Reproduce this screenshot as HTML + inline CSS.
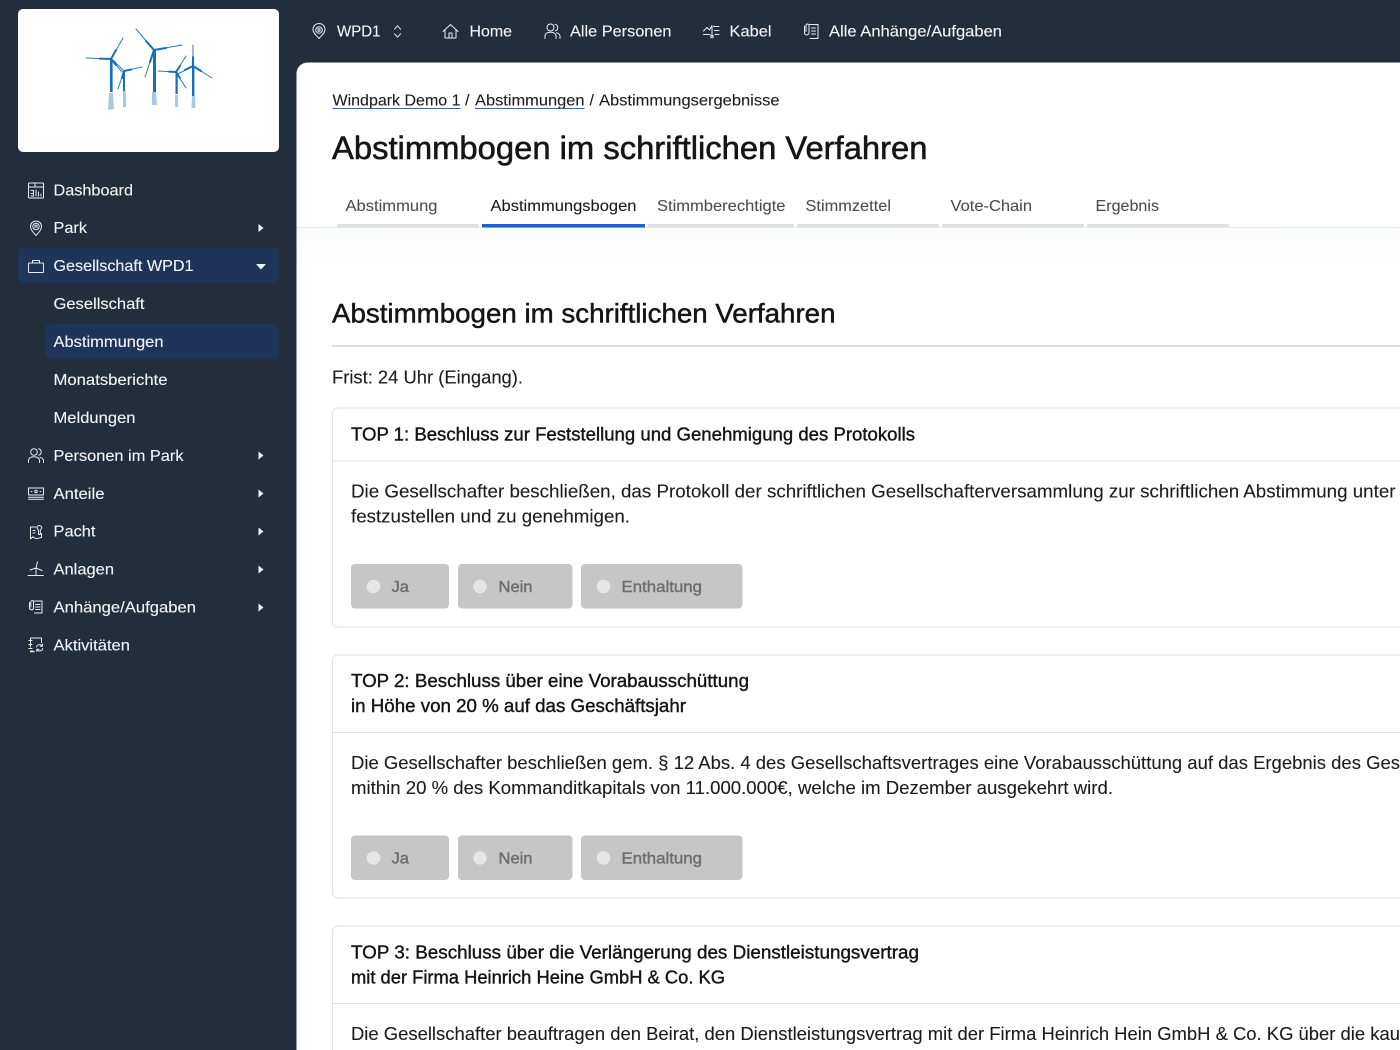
<!DOCTYPE html>
<html lang="de">
<head>
<meta charset="utf-8">
<title>Abstimmbogen im schriftlichen Verfahren</title>
<style>
html,body{margin:0;padding:0;width:1400px;height:1050px;overflow:hidden;background:#222e3c}
svg{display:block}
text{font-family:"Liberation Sans",sans-serif;font-size:16px}
.n{fill:#f2f4f6;font-size:16px;stroke:#f2f4f6;stroke-width:.12px}
.t{fill:#4d4d4d;font-size:16px;stroke:#4d4d4d;stroke-width:.08px}
.d{fill:#1c1c1c;font-size:18px;stroke:#1c1c1c;stroke-width:.1px}
.m{fill:#141414;font-size:18px;stroke:#141414;stroke-width:.38px}
.b{fill:#6e6e6e;font-size:16px;stroke:#6e6e6e;stroke-width:.4px}
.i{fill:none;stroke:#e8ecef;stroke-width:1;stroke-linecap:round;stroke-linejoin:round}
.bl{stroke:#2a7cc0;stroke-width:1;stroke-linecap:round}
.bh{stroke:#1470b8;stroke-width:2;stroke-linecap:round}
</style>
</head>
<body>
<svg xmlns="http://www.w3.org/2000/svg" width="1400" height="1050" viewBox="0 0 1400 1050">
<rect width="1400" height="1050" fill="#222e3c"/>

<!-- logo -->
<rect x="18" y="9" width="261" height="143" rx="5" fill="#fff"/>
<g class="bl">
<line x1="111" y1="59" x2="86" y2="58"/><line x1="111" y1="59" x2="123" y2="38"/><line x1="111" y1="59" x2="122" y2="72"/>
<line x1="124" y1="71" x2="142" y2="67"/><line x1="124" y1="71" x2="118" y2="89"/><line x1="124" y1="71" x2="113" y2="60"/>
<line x1="154" y1="50" x2="136" y2="29"/><line x1="154" y1="50" x2="182" y2="45"/><line x1="154" y1="50" x2="145" y2="77"/>
<line x1="176" y1="72" x2="158" y2="71"/><line x1="176" y1="72" x2="186" y2="56"/><line x1="176" y1="72" x2="186" y2="88"/>
<line x1="193" y1="66" x2="193" y2="45"/><line x1="193" y1="66" x2="212" y2="78"/><line x1="193" y1="66" x2="176" y2="75"/>
</g>
<g class="bh">
<line x1="111" y1="59" x2="100" y2="58.600"/><line x1="111" y1="59" x2="116" y2="50"/><line x1="111" y1="59" x2="116" y2="65"/>
<line x1="124" y1="71" x2="131" y2="69.500"/><line x1="124" y1="71" x2="122" y2="78"/>
<line x1="154" y1="50" x2="146" y2="41"/><line x1="154" y1="50" x2="166" y2="48"/><line x1="154" y1="50" x2="150" y2="62"/>
<line x1="176" y1="72" x2="169" y2="71.600"/><line x1="176" y1="72" x2="180" y2="66"/><line x1="176" y1="72" x2="180" y2="78"/>
<line x1="193" y1="66" x2="193" y2="57"/><line x1="193" y1="66" x2="201" y2="71"/><line x1="193" y1="66" x2="185" y2="70"/>
</g>
<g fill="#1470b8">
<rect x="110" y="59" width="2.600" height="33"/><rect x="123" y="71" width="2" height="20"/><rect x="153" y="50" width="3" height="42"/><rect x="175.500" y="72" width="2.200" height="22"/><rect x="192" y="66" width="2.400" height="30"/>
</g>
<g fill="#a9c9e3">
<polygon points="109,93 113,93 114,109 108,110"/><polygon points="123,91 126,91 126,107 123,107"/><polygon points="152,92 156,92 157,105 152,105"/><polygon points="175,95 178,95 178,107 175,107"/><polygon points="192,96 195,96 195.500,108 191.500,108"/>
</g>

<!-- sidebar -->
<rect x="18" y="248" width="261" height="35" rx="5" fill="#1e3559"/>
<rect x="45" y="324" width="234" height="35" rx="5" fill="#1e3559"/>
<text class="n" x="53.500" y="195.500" textLength="79.500" lengthAdjust="spacingAndGlyphs">Dashboard</text>
<text class="n" x="53.500" y="233" textLength="33.500" lengthAdjust="spacingAndGlyphs">Park</text>
<text class="n" x="53.500" y="271" textLength="140" lengthAdjust="spacingAndGlyphs">Gesellschaft WPD1</text>
<text class="n" x="53.500" y="309" textLength="91" lengthAdjust="spacingAndGlyphs">Gesellschaft</text>
<text class="n" x="53.500" y="347" textLength="110" lengthAdjust="spacingAndGlyphs">Abstimmungen</text>
<text class="n" x="53.500" y="385" textLength="114" lengthAdjust="spacingAndGlyphs">Monatsberichte</text>
<text class="n" x="53.500" y="423" textLength="82" lengthAdjust="spacingAndGlyphs">Meldungen</text>
<text class="n" x="53.500" y="461" textLength="130" lengthAdjust="spacingAndGlyphs">Personen im Park</text>
<text class="n" x="53.500" y="499" textLength="51" lengthAdjust="spacingAndGlyphs">Anteile</text>
<text class="n" x="53.500" y="536.500" textLength="42" lengthAdjust="spacingAndGlyphs">Pacht</text>
<text class="n" x="53.500" y="574.500" textLength="60.500" lengthAdjust="spacingAndGlyphs">Anlagen</text>
<text class="n" x="53.500" y="612.500" textLength="142.500" lengthAdjust="spacingAndGlyphs">Anhänge/Aufgaben</text>
<text class="n" x="53.500" y="650.500" textLength="76.500" lengthAdjust="spacingAndGlyphs">Aktivitäten</text>

<!-- arrows -->
<g fill="#f2f4f6">
<polygon points="258.500,224 263.500,228 258.500,232"/>
<polygon points="256,264 266,264 261,269.500"/>
<polygon points="258.500,451.500 263.500,455.500 258.500,459.500"/>
<polygon points="258.500,489.500 263.500,493.500 258.500,497.500"/>
<polygon points="258.500,527.500 263.500,531.500 258.500,535.500"/>
<polygon points="258.500,565.500 263.500,569.500 258.500,573.500"/>
<polygon points="258.500,603.500 263.500,607.500 258.500,611.500"/>
</g>

<!-- sidebar icons -->
<g class="i">
<!-- dashboard -->
<rect x="28.500" y="183" width="15" height="15" rx=".8"/><path d="M28.500 187H43.500M35 183V187M31 193.500H33.500V190.500H31M31 196H33.500V193.500M36 190V196M38.500 192V196M41 194V196"/>
<!-- park pin -->
<path d="M36 235.500C33 232 30.500 229.800 30.500 226.500A5.500 5.500 0 0 1 41.500 226.500C41.500 229.800 39 232 36 235.500Z"/><circle cx="36" cy="226.500" r="3.200"/><path d="M35 225.200H37V227.800M35 225.200V227.800"/>
<!-- briefcase -->
<rect x="28.500" y="263" width="15" height="9.500" rx=".8"/><path d="M32.500 263V260.500H39.500V263"/>
<!-- persons -->
<circle cx="34" cy="452" r="3.300"/><path d="M28.500 462.500V460.500C28.500 458.500 30.500 456.800 34 456.800C37.500 456.800 39.500 458.500 39.500 460.500V462.500M38.500 448.800A3.300 3.300 0 0 1 38.800 455.200M40 457.300C42 457.800 43.500 459 43.500 460.800V462.500"/>
<!-- shares -->
<rect x="28.500" y="488" width="15" height="7"/><path d="M28.500 497.200H43.500M28.500 499.300H43.500"/><circle cx="36" cy="491.500" r="1.200"/><path d="M31 491.500H31.800M40.200 491.500H41"/>
<!-- lease -->
<path d="M36 527H30.500V538.800L33 536.800L36 538.800L41.500 537.500V533.500M33 530.500H35M33 533H35"/><path d="M37.200 528.500A2.300 2.300 0 1 1 41.600 528.500L40.300 530.200V534.500H38.500V530.200Z"/>
<!-- turbine -->
<path d="M28 575.500H43.500M36 575.500L36 568M36 568L37.500 561.800M36 568L30 570M36 568L42 570.500"/>
<!-- attachments -->
<path d="M33 601H42V613H34.500M35.500 604.500H40M35.500 607H40M35.500 609.500H40"/><path d="M29.500 602.500V608.500A2.200 2.200 0 0 0 33.500 608.500V601.500A1.500 1.500 0 0 0 30.800 601.500V607"/>
<!-- activity -->
<path d="M30.500 647V638H41.500V642.500M30.500 652V651H33M30.500 638V647M28.800 640.500H32M28.800 644.500H32M28.800 648.500H32M30.500 651.800H34.500"/><path d="M36.500 647A3.200 3.200 0 0 1 42.200 646M42.800 648.500A3.200 3.200 0 0 1 37 649.500M42.500 644V646.300H40.200M36.800 651.500V649.300H39"/>
</g>

<!-- top nav -->
<text class="n" x="337" y="36.500" textLength="43.500" lengthAdjust="spacingAndGlyphs">WPD1</text>
<text class="n" x="469.500" y="36.500" textLength="42.500" lengthAdjust="spacingAndGlyphs">Home</text>
<text class="n" x="570" y="36.500" textLength="101.500" lengthAdjust="spacingAndGlyphs">Alle Personen</text>
<text class="n" x="729.500" y="36.500" textLength="42" lengthAdjust="spacingAndGlyphs">Kabel</text>
<text class="n" x="829" y="36.500" textLength="173" lengthAdjust="spacingAndGlyphs">Alle Anhänge/Aufgaben</text>
<g class="i">
<path d="M319 38.500C316.500 35.500 313 33 313 29.500A6 6 0 0 1 325 29.500C325 33 321.500 35.500 319 38.500Z"/><circle cx="319" cy="30" r="3.300"/><path d="M318 28.800H320V31.300H318Z"/>
<path d="M394.500 29.200L397.500 25.800L400.500 29.200M394.500 33.800L397.500 37.200L400.500 33.800"/>
<path d="M443 31.500L450.500 24.500L458 31.500M445 30V38H456V30M449 38V33H452V38"/>
<circle cx="550.500" cy="27.500" r="3.500"/><path d="M545 38.500V36C545 33.800 547 32.300 550.500 32.300C554 32.300 556 33.800 556 36V38.500M555 24.200A3.400 3.400 0 0 1 555.300 30.800M556.500 32.800C558.500 33.300 560 34.600 560 36.400V38.500"/>
<path d="M703.500 34.500H710M715 34.500H719M703.500 31L707 27.500L709.500 30L712 25.500V36M713.500 26.500H719M714.500 30.500H719"/><circle cx="712" cy="36.500" r="1.300"/>
<path d="M809.500 24.500H818V38.500H810M811.500 28H815.500M811.500 31H815.500M811.500 34H815.500"/><path d="M804.500 26V33A2.300 2.300 0 0 0 809 33V25.500A1.500 1.500 0 0 0 806 25.500V31.500"/>
</g>

<!-- main panel -->
<path d="M296.500 73.500A11 11 0 0 1 307.500 62.500H1400V1050H296.500Z" fill="#fff"/>
<defs><linearGradient id="fade" x1="0" y1="0" x2="0" y2="1"><stop offset="0" stop-color="#fafbfb"/><stop offset="1" stop-color="#fff"/></linearGradient></defs>
<rect x="296.500" y="228" width="1103.500" height="36" fill="url(#fade)"/>

<!-- breadcrumb -->
<text class="d" style="font-size:16px" x="332.500" y="105.500" textLength="128" lengthAdjust="spacingAndGlyphs">Windpark Demo 1</text>
<text class="d" style="font-size:16px" x="465" y="105.500">/</text>
<text class="d" style="font-size:16px" x="475" y="105.500" textLength="109.500" lengthAdjust="spacingAndGlyphs">Abstimmungen</text>
<text class="d" style="font-size:16px" x="589.500" y="105.500">/</text>
<text class="d" style="font-size:16px" x="599" y="105.500" textLength="180.500" lengthAdjust="spacingAndGlyphs">Abstimmungsergebnisse</text>
<path d="M332.500 108.500H460.500M475 108.500H584.500" stroke="#2a62d0" stroke-width="1"/>

<!-- title -->
<text x="332" y="159" style="font-size:32px;fill:#151515;stroke:#151515;stroke-width:.55px" textLength="595.500" lengthAdjust="spacingAndGlyphs">Abstimmbogen im schriftlichen Verfahren</text>

<!-- tabs -->
<rect x="296.500" y="227" width="1103.500" height="1" fill="#e6e7e7"/>
<g fill="#e0e0e0">
<rect x="337" y="224" width="142" height="3"/><rect x="648" y="224" width="146" height="3"/><rect x="797" y="224" width="142" height="3"/><rect x="942" y="224" width="142" height="3"/><rect x="1087" y="224" width="142" height="3"/>
</g>
<rect x="482" y="224" width="163" height="3.500" fill="#1a5fdc"/>
<text class="t" x="345.500" y="211" textLength="92" lengthAdjust="spacingAndGlyphs">Abstimmung</text>
<text class="t" style="fill:#1a1a1a;stroke:#1a1a1a" x="490.500" y="211" textLength="146" lengthAdjust="spacingAndGlyphs">Abstimmungsbogen</text>
<text class="t" x="657" y="211" textLength="128.500" lengthAdjust="spacingAndGlyphs">Stimmberechtigte</text>
<text class="t" x="805.500" y="211" textLength="85.500" lengthAdjust="spacingAndGlyphs">Stimmzettel</text>
<text class="t" x="950.500" y="211" textLength="81.500" lengthAdjust="spacingAndGlyphs">Vote-Chain</text>
<text class="t" x="1095.500" y="211" textLength="63.500" lengthAdjust="spacingAndGlyphs">Ergebnis</text>

<!-- section heading -->
<text x="332" y="322.500" style="font-size:27px;fill:#151515;stroke:#151515;stroke-width:.5px" textLength="503.500" lengthAdjust="spacingAndGlyphs">Abstimmbogen im schriftlichen Verfahren</text>
<rect x="332" y="345" width="1068" height="2" fill="#dedede"/>
<text class="d" x="332" y="383.500" textLength="191" lengthAdjust="spacingAndGlyphs">Frist: 24 Uhr (Eingang).</text>

<!-- card 1 -->
<path d="M1400 408H337.500A5 5 0 0 0 332.500 413V622A5 5 0 0 0 337.500 627H1400" fill="#fff" stroke="#e3e3e3"/>
<rect x="333" y="460.500" width="1067" height="1" fill="#e3e3e3"/>
<text class="m" x="351" y="440.500" textLength="564" lengthAdjust="spacingAndGlyphs">TOP 1: Beschluss zur Feststellung und Genehmigung des Protokolls</text>
<text class="d" x="351" y="497.500" textLength="1044.500" lengthAdjust="spacingAndGlyphs">Die Gesellschafter beschließen, das Protokoll der schriftlichen Gesellschafterversammlung zur schriftlichen Abstimmung unter</text>
<text class="d" x="351" y="522.500" textLength="279" lengthAdjust="spacingAndGlyphs">festzustellen und zu genehmigen.</text>
<g>
<rect x="351" y="564" width="98" height="44.500" rx="4" fill="#c6c6c6"/><circle cx="373.500" cy="586.500" r="6.800" fill="#e6e6e6"/><text class="b" x="391.500" y="592" textLength="17.500" lengthAdjust="spacingAndGlyphs">Ja</text>
<rect x="458" y="564" width="114.500" height="44.500" rx="4" fill="#c6c6c6"/><circle cx="480" cy="586.500" r="6.800" fill="#e6e6e6"/><text class="b" x="498.500" y="592" textLength="34" lengthAdjust="spacingAndGlyphs">Nein</text>
<rect x="581" y="564" width="161.500" height="44.500" rx="4" fill="#c6c6c6"/><circle cx="603.500" cy="586.500" r="6.800" fill="#e6e6e6"/><text class="b" x="621.500" y="592" textLength="80.500" lengthAdjust="spacingAndGlyphs">Enthaltung</text>
</g>

<!-- card 2 -->
<path d="M1400 655H337.500A5 5 0 0 0 332.500 660V893A5 5 0 0 0 337.500 898H1400" fill="#fff" stroke="#e3e3e3"/>
<rect x="333" y="732" width="1067" height="1" fill="#e3e3e3"/>
<text class="m" x="351" y="687" textLength="398" lengthAdjust="spacingAndGlyphs">TOP 2: Beschluss über eine Vorabausschüttung</text>
<text class="m" x="351" y="712" textLength="335" lengthAdjust="spacingAndGlyphs">in Höhe von 20 % auf das Geschäftsjahr</text>
<text class="d" x="351" y="769" textLength="1049" lengthAdjust="spacingAndGlyphs">Die Gesellschafter beschließen gem. § 12 Abs. 4 des Gesellschaftsvertrages eine Vorabausschüttung auf das Ergebnis des Ges</text>
<text class="d" x="351" y="794" textLength="762" lengthAdjust="spacingAndGlyphs">mithin 20 % des Kommanditkapitals von 11.000.000€, welche im Dezember ausgekehrt wird.</text>
<g>
<rect x="351" y="835.500" width="98" height="44.500" rx="4" fill="#c6c6c6"/><circle cx="373.500" cy="858" r="6.800" fill="#e6e6e6"/><text class="b" x="391.500" y="863.500" textLength="17.500" lengthAdjust="spacingAndGlyphs">Ja</text>
<rect x="458" y="835.500" width="114.500" height="44.500" rx="4" fill="#c6c6c6"/><circle cx="480" cy="858" r="6.800" fill="#e6e6e6"/><text class="b" x="498.500" y="863.500" textLength="34" lengthAdjust="spacingAndGlyphs">Nein</text>
<rect x="581" y="835.500" width="161.500" height="44.500" rx="4" fill="#c6c6c6"/><circle cx="603.500" cy="858" r="6.800" fill="#e6e6e6"/><text class="b" x="621.500" y="863.500" textLength="80.500" lengthAdjust="spacingAndGlyphs">Enthaltung</text>
</g>

<!-- card 3 -->
<path d="M1400 926H337.500A5 5 0 0 0 332.500 931V1050" fill="#fff" stroke="#e3e3e3"/>
<rect x="333" y="1003" width="1067" height="1" fill="#e3e3e3"/>
<text class="m" x="351" y="958.500" textLength="568" lengthAdjust="spacingAndGlyphs">TOP 3: Beschluss über die Verlängerung des Dienstleistungsvertrag</text>
<text class="m" x="351" y="983.500" textLength="374" lengthAdjust="spacingAndGlyphs">mit der Firma Heinrich Heine GmbH &amp; Co. KG</text>
<text class="d" x="351" y="1040" textLength="1049" lengthAdjust="spacingAndGlyphs">Die Gesellschafter beauftragen den Beirat, den Dienstleistungsvertrag mit der Firma Heinrich Hein GmbH &amp; Co. KG über die kau</text>
</svg>
</body>
</html>
